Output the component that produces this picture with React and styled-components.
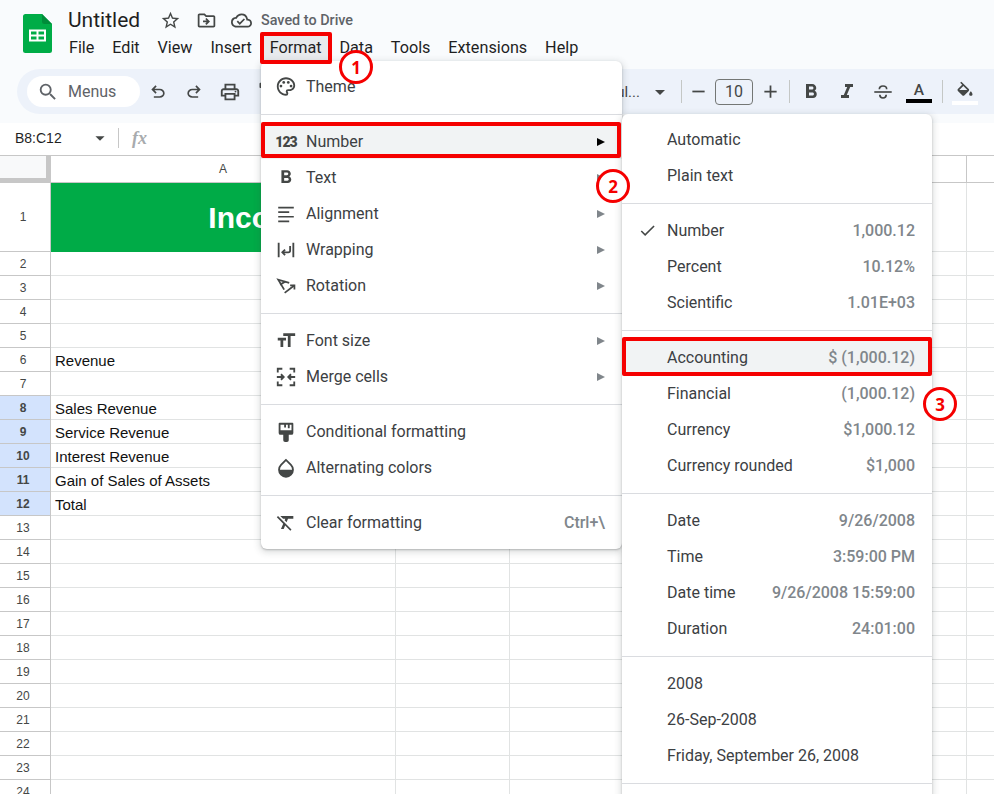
import React from "react";
import styled, { createGlobalStyle } from "styled-components";
import {
  MdCheck,
  MdSearch,
  MdOutlineLocalPrintshop,
  MdOutlineFormatPaint,
  MdStarBorder,
  MdOutlineDriveFileMove,
  MdOutlineCloudDone,
  MdOutlinePalette,
  MdFormatBold,
  MdFormatSize,
  MdFormatClear,
  MdFormatItalic,
  MdAdd,
  MdRemove,
  MdArrowDropDown,
} from "react-icons/md";

const GlobalStyle = createGlobalStyle`
  html, body { margin: 0; padding: 0; background: #fff; }
  * { box-sizing: border-box; }
`;

const menuBarItems = ["File", "Edit", "View", "Insert", "Format", "Data", "Tools", "Extensions", "Help"];
const columns = ["A", "B", "C", "D", ""];
const rowLabels = { 6: "Revenue", 8: "Sales Revenue", 9: "Service Revenue", 10: "Interest Revenue", 11: "Gain of Sales of Assets", 12: "Total" };
const rowNumbers = Array.from({ length: 23 }, (_, i) => i + 2);

const UndoIcon = () => (
  <svg width="20" height="20" viewBox="0 -960 960 960" fill="currentColor">
    <path d="M280-200v-80h284q63 0 109.500-40T720-420q0-60-46.500-100T564-560H312l104 104-56 56-200-200 200-200 56 56-104 104h252q97 0 166.500 63T800-420q0 94-69.500 157T564-200H280Z" />
  </svg>
);

const RedoIcon = () => (
  <svg width="20" height="20" viewBox="0 -960 960 960" fill="currentColor">
    <path d="M396-200q-97 0-166.500-63T160-420q0-94 69.500-157T396-640h252L544-744l56-56 200 200-200 200-56-56 104-104H396q-63 0-109.500 40T240-420q0 60 46.500 100T396-280h284v80H396Z" />
  </svg>
);

const StrikeIcon = () => (
  <svg width="22" height="22" viewBox="0 0 24 24" fill="none" stroke="currentColor" strokeWidth="1.800">
    <path d="M2.500 12h19" />
    <path d="M8 9c0-2.200 1.800-3.500 4-3.500S16 6.800 16 9" />
    <path d="M8.500 15c0 2.200 1.500 3.500 3.500 3.500s3.500-1.300 3.500-3.500" />
  </svg>
);

const FillIcon = () => (
  <svg width="20" height="20" viewBox="0 0 24 20" fill="currentColor">
    <path d="M16.560 8.940 7.620 0 6.210 1.410l2.380 2.380-5.150 5.150c-.59.59-.59 1.540 0 2.120l5.500 5.500c.29.29.68.44 1.060.44s.77-.15 1.060-.44l5.500-5.500c.59-.58.59-1.530 0-2.120zM5.210 10 10 5.210 14.790 10H5.210zM19 11.500s-2 2.170-2 3.500c0 1.100.9 2 2 2s2-.9 2-2c0-1.330-2-3.500-2-3.500z" />
  </svg>
);

const AlignIcon = () => (
  <svg width="22" height="22" viewBox="0 0 24 24" fill="none" stroke="currentColor" strokeWidth="1.800">
    <path d="M3.500 5h17M3.500 10h12M3.500 15h17M3.500 20h12" />
  </svg>
);

const WrapIcon = () => (
  <svg width="22" height="22" viewBox="0 0 24 24" fill="none" stroke="currentColor" strokeWidth="2">
    <path d="M4 4v16M20 4v16" />
    <path d="M16.500 7.500v5a2 2 0 0 1-2 2H8.500" />
    <path d="M11 11.500l-3 3 3 3" />
  </svg>
);

const RotationIcon = () => (
  <svg width="22" height="22" viewBox="0 0 24 24" fill="none" stroke="currentColor" strokeWidth="1.900">
    <path d="M15.500 8.500 3.500 5l6.500 11" />
    <path d="M5.500 10.500l6-3.500" />
    <path d="M10.500 19.500 21 11.500" />
    <path d="M16.500 11.200h4.700v4.600" />
  </svg>
);

const MergeIcon = () => (
  <svg width="22" height="22" viewBox="0 0 24 24" fill="none" stroke="currentColor" strokeWidth="2">
    <path d="M8 3H3v4M16 3h5v4M8 21H3v-4M16 21h5v-4" />
    <path d="M2 12h7M6.500 9 9.500 12l-3 3M22 12h-7M17.500 9l-3 3 3 3" />
  </svg>
);

const ConditionalIcon = () => (
  <svg width="22" height="22" viewBox="0 0 24 24" fill="currentColor">
    <path d="M5 2h14a1 1 0 0 1 1 1v10a2 2 0 0 1-2 2h-3v6a2 2 0 0 1-2 2h-2a2 2 0 0 1-2-2v-6H6a2 2 0 0 1-2-2V3a1 1 0 0 1 1-1zm1 8h12V4h-2v4h-2V4h-2v3h-2V4H6v6z" />
  </svg>
);

const AlternatingIcon = () => (
  <svg width="22" height="22" viewBox="0 0 24 24">
    <path d="M12 3.200 6.600 8.600a7.600 7.600 0 1 0 10.800 0L12 3.200z" fill="none" stroke="currentColor" strokeWidth="2" />
    <path d="M4.500 14h15a7.500 7.500 0 0 1-15 0z" fill="currentColor" />
  </svg>
);

const SheetsLogo = () => (
  <svg width="29" height="39" viewBox="0 0 29 39">
    <path d="M2.500 0H19l10 10v26.500a2.500 2.500 0 0 1-2.500 2.500h-24A2.500 2.500 0 0 1 0 36.500V2.500A2.500 2.500 0 0 1 2.500 0z" fill="#00ac47" />
    <path d="M19 0l10 10h-7.500a2.500 2.500 0 0 1-2.500-2.500V0z" fill="#008c3a" />
    <path d="M6 15.500h17v12H6zM8 17.500v3h5.500v-3zm7.500 0v3H21v-3zM8 22.500v3h5.500v-3zm7.500 0v3H21v-3z" fill="#fff" fillRule="evenodd" />
  </svg>
);

const Page = styled.div`
  position: relative;
  width: 994px;
  height: 794px;
  overflow: hidden;
  background: #fff;
  font-family: Roboto, "Liberation Sans", sans-serif;
  color: #3c4043;
`;

const Header = styled.header`
  height: 123px;
  background: #f9fbfd;
`;

const TopBar = styled.div`
  display: flex;
  height: 69px;
  padding: 14px 0 0 23px;
`;

const TitleColumn = styled.div`
  display: flex;
  flex-direction: column;
  margin-left: 16px;
`;

const TitleRow = styled.div`
  display: flex;
  align-items: center;
  height: 24px;
  margin-top: -6px;
  color: #444746;
`;

const DocTitle = styled.span`
  font-size: 21px;
  color: #1f1f1f;
  width: 84px;
`;

const TitleIcon = styled.span`
  display: flex;
  width: 36px;
  justify-content: center;
  margin-left: ${(props) => props.$shift || 0}px;
  font-size: 21px;
`;

const SavedText = styled.span`
  margin-left: 2px;
  font-size: 14.400px;
  font-weight: 500;
  color: #5f6368;
`;

const MenuBar = styled.nav`
  display: flex;
  margin: 0 0 0 -8px;
`;

const MenuBarItem = styled.span`
  display: flex;
  align-items: center;
  height: 30px;
  padding: 0 8.950px;
  font-size: 16.200px;
  color: #1f1f1f;
  background: ${(props) => (props.$open ? "#e8eaed" : "transparent")};
`;

const Toolbar = styled.div`
  display: flex;
  align-items: center;
  height: 45px;
  margin: 0 -30px 0 17px;
  padding: 0 41px 0 10px;
  border-radius: 23px;
  background: #edf2fa;
  color: #444746;
`;

const SearchPill = styled.div`
  display: flex;
  align-items: center;
  width: 113px;
  height: 31px;
  padding-left: 10px;
  gap: 9px;
  border-radius: 16px;
  background: #fff;
  font-size: 16px;
  color: #5f6368;
`;

const ToolButton = styled.span`
  display: flex;
  align-items: center;
  justify-content: center;
  flex: none;
  width: ${(props) => props.$width || 36}px;
  font-size: ${(props) => props.$size || 21}px;
`;

const ToolGap = styled.div`
  flex: 1;
`;

const FontName = styled.span`
  margin-right: 5px;
  font-size: 15px;
`;

const ToolDivider = styled.span`
  flex: none;
  width: 1px;
  height: 23px;
  margin: 0 ${(props) => props.$right ?? 4}px 0 ${(props) => props.$left ?? 4}px;
  background: #c4c7c5;
`;

const SizeBox = styled.span`
  flex: none;
  display: flex;
  align-items: center;
  justify-content: center;
  width: 38px;
  height: 26px;
  margin: 0 1px 0 1px;
  border: 1px solid #747775;
  border-radius: 4px;
  font-size: 16px;
`;

const ColorTool = styled.span`
  display: flex;
  flex-direction: column;
  align-items: center;
  flex: none;
  width: 36px;
  margin-top: 2px;
`;

const ColorLetter = styled.span`
  font-size: 15.500px;
  line-height: 16px;
  font-weight: 500;
`;

const ColorBar = styled.span`
  width: 26px;
  height: 4px;
  margin-top: 1px;
  background: ${(props) => props.$color};
`;

const FormulaBar = styled.div`
  display: flex;
  align-items: center;
  height: 33px;
  padding: 0 0 2px 15px;
  border-bottom: 1px solid #c7c7c7;
  background: #fff;
  font-family: "Liberation Sans", Arial, sans-serif;
  font-size: 14px;
  color: #1f1f1f;
`;

const NameBox = styled.span`
  display: flex;
  align-items: center;
  width: 103px;
  justify-content: space-between;
`;

const NameArrow = styled.span`
  display: flex;
  margin-right: 7px;
  font-size: 22px;
  color: #444746;
`;

const FormulaDivider = styled.span`
  width: 1px;
  height: 20px;
  background: #c7c7c7;
`;

const FxLabel = styled.span`
  margin-left: 13px;
  font-family: "Liberation Serif", serif;
  font-style: italic;
  font-weight: 700;
  font-size: 18px;
  color: #a8abae;
`;

const SheetRow = styled.div`
  display: grid;
  grid-template-columns: 51px 345px 114px 114px 343px 114px;
  height: ${(props) => props.$height}px;
`;

const CornerCell = styled.div`
  background: #f8f9fa;
  border-right: 5px solid #c7c7c7;
  border-bottom: 5px solid #c7c7c7;
`;

const ColumnHead = styled.div`
  display: flex;
  align-items: center;
  justify-content: center;
  border-right: 1px solid #c7c7c7;
  border-bottom: 1px solid #c7c7c7;
  font-family: "Liberation Sans", Arial, sans-serif;
  font-size: 12px;
  color: #444746;
`;

const RowHead = styled.div`
  display: flex;
  align-items: center;
  justify-content: center;
  padding-right: 4px;
  border-right: 1px solid #c7c7c7;
  border-bottom: 1px solid #c7c7c7;
  background: ${(props) => (props.$selected ? "#d3e3fd" : "#fff")};
  font-family: "Liberation Sans", Arial, sans-serif;
  font-size: 12px;
  font-weight: ${(props) => (props.$selected ? 700 : 400)};
  color: #444746;
`;

const Cell = styled.div`
  display: flex;
  align-items: flex-end;
  padding: 0 0 2px 4px;
  border-right: 1px solid #e1e3e3;
  border-bottom: 1px solid #e1e3e3;
  font-family: "Liberation Sans", Arial, sans-serif;
  font-size: 15px;
  color: #111;
  white-space: nowrap;
`;

const TitleCell = styled.div`
  grid-column: span 3;
  display: flex;
  align-items: center;
  justify-content: center;
  background: #00ab47;
  font-family: "Liberation Sans", Arial, sans-serif;
  font-size: 30px;
  font-weight: 700;
  color: #fff;
`;

const Menu = styled.div`
  position: absolute;
  background: #fff;
  box-shadow: 0 2px 6px 2px rgba(60, 64, 67, 0.15), 0 1px 2px rgba(60, 64, 67, 0.3);
`;

const FormatMenu = styled(Menu)`
  left: 261px;
  top: 61px;
  width: 361px;
  padding: 7px 0 9px;
  border-radius: 6px;
`;

const NumberMenu = styled(Menu)`
  left: 622px;
  top: 114px;
  width: 310px;
  height: 700px;
  padding-top: 7px;
  border-radius: 6px;
`;

const MenuRow = styled.div`
  display: flex;
  align-items: center;
  height: 36px;
  padding: 1px 17px 0 0;
  background: ${(props) => (props.$active ? "#f1f3f4" : "transparent")};
  font-size: 16px;
  color: #3c4043;
`;

const MenuIcon = styled.span`
  display: flex;
  align-items: center;
  justify-content: center;
  flex: none;
  width: 22px;
  margin: 0 9px 0 14px;
  font-size: ${(props) => props.$size || 22}px;
  color: #444746;
`;

const DigitsIcon = styled.span`
  font-size: 14px;
  font-weight: 900;
  letter-spacing: -1px;
`;

const CheckSlot = styled.span`
  display: flex;
  align-items: center;
  justify-content: center;
  flex: none;
  width: 45px;
  padding-left: 5px;
  font-size: 19px;
  color: #444746;
`;

const RowLabel = styled.span`
  flex: 1;
`;

const RowValue = styled.span`
  font-weight: 500;
  color: #80868b;
`;

const SubArrow = styled.span`
  width: 0;
  height: 0;
  border-left: 8px solid ${(props) => (props.$active ? "#000" : "#80868b")};
  border-top: 4px solid transparent;
  border-bottom: 4px solid transparent;
`;

const MenuDivider = styled.div`
  height: 1px;
  margin: 10px 0 8px;
  background: #dadce0;
`;

const Marker = styled.div`
  position: absolute;
  left: ${(props) => props.$left}px;
  top: ${(props) => props.$top}px;
  width: ${(props) => props.$width}px;
  height: ${(props) => props.$height}px;
  border: 4px solid #f50000;
  border-radius: 2px;
`;

const Callout = styled.div`
  position: absolute;
  left: ${(props) => props.$left}px;
  top: ${(props) => props.$top}px;
  display: flex;
  align-items: center;
  justify-content: center;
  width: 34px;
  height: 34px;
  border: 3px solid #f50000;
  border-radius: 50%;
  background: #fff;
  font-family: "Open Sans", sans-serif;
  font-size: 17px;
  font-weight: 700;
  color: #f50000;
`;

function FormatItem({ icon, iconSize, label, arrow, active, shortcut }) {
  return (
    <MenuRow $active={active}>
      <MenuIcon $size={iconSize}>{icon}</MenuIcon>
      <RowLabel>{label}</RowLabel>
      {arrow && <SubArrow $active={active} />}
      {shortcut && <RowValue>{shortcut}</RowValue>}
    </MenuRow>
  );
}

function NumberItem({ label, value, checked, active }) {
  return (
    <MenuRow $active={active}>
      <CheckSlot>{checked && <MdCheck />}</CheckSlot>
      <RowLabel>{label}</RowLabel>
      {value && <RowValue>{value}</RowValue>}
    </MenuRow>
  );
}

export default function App() {
  return (
    <Page>
      <GlobalStyle />
      <Header>
        <TopBar>
          <SheetsLogo />
          <TitleColumn>
            <TitleRow>
              <DocTitle>Untitled</DocTitle>
              <TitleIcon><MdStarBorder /></TitleIcon>
              <TitleIcon><MdOutlineDriveFileMove /></TitleIcon>
              <TitleIcon $shift={-1}><MdOutlineCloudDone /></TitleIcon>
              <SavedText>Saved to Drive</SavedText>
            </TitleRow>
            <MenuBar>
              {menuBarItems.map((item) => (
                <MenuBarItem key={item} $open={item === "Format"}>{item}</MenuBarItem>
              ))}
            </MenuBar>
          </TitleColumn>
        </TopBar>
        <Toolbar>
          <SearchPill>
            <MdSearch size={22} />
            Menus
          </SearchPill>
          <ToolButton><UndoIcon /></ToolButton>
          <ToolButton><RedoIcon /></ToolButton>
          <ToolButton $size={22}><MdOutlineLocalPrintshop /></ToolButton>
          <ToolButton><MdOutlineFormatPaint /></ToolButton>
          <ToolGap />
          <FontName>Defaul...</FontName>
          <ToolButton $size={24} $width={30}><MdArrowDropDown /></ToolButton>
          <ToolDivider $left={6} $right={0} />
          <ToolButton $width={32}><MdRemove /></ToolButton>
          <SizeBox>10</SizeBox>
          <ToolButton $width={32}><MdAdd /></ToolButton>
          <ToolDivider $left={3} $right={3} />
          <ToolButton $size={24}><MdFormatBold /></ToolButton>
          <ToolButton $size={24}><MdFormatItalic /></ToolButton>
          <ToolButton><StrikeIcon /></ToolButton>
          <ColorTool>
            <ColorLetter>A</ColorLetter>
            <ColorBar $color="#000" />
          </ColorTool>
          <ToolDivider $left={5} $right={4} />
          <ColorTool>
            <FillIcon />
            <ColorBar $color="#fff" />
          </ColorTool>
        </Toolbar>
      </Header>
      <FormulaBar>
        <NameBox>
          B8:C12
          <NameArrow><MdArrowDropDown /></NameArrow>
        </NameBox>
        <FormulaDivider />
        <FxLabel>fx</FxLabel>
      </FormulaBar>
      <SheetRow $height={27}>
        <CornerCell />
        {columns.map((column, index) => (
          <ColumnHead key={index}>{column}</ColumnHead>
        ))}
      </SheetRow>
      <SheetRow $height={69}>
        <RowHead>1</RowHead>
        <TitleCell>Income Statement</TitleCell>
        <Cell />
        <Cell />
      </SheetRow>
      {rowNumbers.map((number) => (
        <SheetRow key={number} $height={24}>
          <RowHead $selected={number >= 8 && number <= 12}>{number}</RowHead>
          <Cell>{rowLabels[number]}</Cell>
          <Cell />
          <Cell />
          <Cell />
          <Cell />
        </SheetRow>
      ))}

      <FormatMenu>
        <FormatItem icon={<MdOutlinePalette />} iconSize={23} label="Theme" />
        <MenuDivider />
        <FormatItem icon={<DigitsIcon>123</DigitsIcon>} label="Number" arrow active />
        <FormatItem icon={<MdFormatBold />} iconSize={27} label="Text" arrow />
        <FormatItem icon={<AlignIcon />} label="Alignment" arrow />
        <FormatItem icon={<WrapIcon />} label="Wrapping" arrow />
        <FormatItem icon={<RotationIcon />} label="Rotation" arrow />
        <MenuDivider />
        <FormatItem icon={<MdFormatSize />} iconSize={23} label="Font size" arrow />
        <FormatItem icon={<MergeIcon />} label="Merge cells" arrow />
        <MenuDivider />
        <FormatItem icon={<ConditionalIcon />} label="Conditional formatting" />
        <FormatItem icon={<AlternatingIcon />} label="Alternating colors" />
        <MenuDivider />
        <FormatItem icon={<MdFormatClear />} iconSize={23} label="Clear formatting" shortcut="Ctrl+\" />
      </FormatMenu>

      <NumberMenu>
        <NumberItem label="Automatic" />
        <NumberItem label="Plain text" />
        <MenuDivider />
        <NumberItem label="Number" value="1,000.12" checked />
        <NumberItem label="Percent" value="10.12%" />
        <NumberItem label="Scientific" value="1.01E+03" />
        <MenuDivider />
        <NumberItem label="Accounting" value="$ (1,000.12)" active />
        <NumberItem label="Financial" value="(1,000.12)" />
        <NumberItem label="Currency" value="$1,000.12" />
        <NumberItem label="Currency rounded" value="$1,000" />
        <MenuDivider />
        <NumberItem label="Date" value="9/26/2008" />
        <NumberItem label="Time" value="3:59:00 PM" />
        <NumberItem label="Date time" value="9/26/2008 15:59:00" />
        <NumberItem label="Duration" value="24:01:00" />
        <MenuDivider />
        <NumberItem label="2008" />
        <NumberItem label="26-Sep-2008" />
        <NumberItem label="Friday, September 26, 2008" />
        <MenuDivider />
      </NumberMenu>

      <Marker $left={260} $top={32} $width={72} $height={32} />
      <Marker $left={261} $top={122} $width={360} $height={36} />
      <Marker $left={622} $top={337} $width={310} $height={39} />
      <Callout $left={339} $top={50}>1</Callout>
      <Callout $left={596} $top={169}>2</Callout>
      <Callout $left={923} $top={387}>3</Callout>
    </Page>
  );
}
